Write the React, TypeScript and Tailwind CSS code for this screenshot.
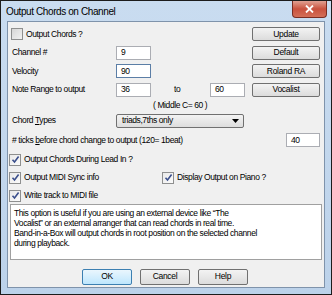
import React from 'react';

const font = { fontFamily: '"Liberation Sans", Arial, sans-serif' };

const Check: React.FC<{ checked?: boolean }> = ({ checked }) => (
  <div className={`w-[12px] h-[12px] border border-[#8e8f8f] flex items-center justify-center shrink-0 ${checked ? 'bg-gradient-to-br from-[#e9e9e9] to-[#fbfbfb]' : 'bg-gradient-to-br from-[#d6d6d6] to-[#f2f2f2]'}`}>
    {checked && (
      <svg width="9" height="9" viewBox="0 0 9 9">
        <path d="M1.5 4.8 L3.5 7 L7.6 1.6" stroke="#3b4f8c" strokeWidth="1.6" fill="none" />
      </svg>
    )}
  </div>
);

const Btn: React.FC<{ label: string; w?: string; h?: string; primary?: boolean }> = ({ label, w = 'w-[68px]', h = 'h-[14px]', primary }) => (
  <div
    className={`${w} ${h} rounded-[2px] border flex items-center justify-center text-[8.5px] tracking-[-0.3px] text-black ${
      primary
        ? 'border-[#3c7fb1] bg-gradient-to-b from-[#eaf6fd] to-[#bee6fd]'
        : 'border-[#707070] bg-gradient-to-b from-[#f3f3f3] to-[#dcdcdc]'
    }`}
  >
    {label}
  </div>
);

const Field: React.FC<{ value: string; w?: string; focus?: boolean }> = ({ value, w = 'w-[35px]', focus }) => (
  <div className={`${w} h-[14px] bg-white border ${focus ? 'border-[#5b7ea6]' : 'border-[#abadb3]'} flex items-center pl-[4px]`}>
    {value}
  </div>
);

export default function App() {
  return (
    <div className="w-[332px] h-[295px] bg-[#1c1c1c] p-[1px] text-black" style={font}>
      <div className="w-full h-full bg-gradient-to-b from-[#c9dcf0] to-[#bcd2ea] flex flex-col">
        {/* title bar */}
        <div className="h-[20px] flex items-start justify-between shrink-0">
          <div className="pl-[5px] pt-[3px] text-[10px] tracking-[-0.4px] text-black">Output Chords on Channel</div>
          <div className="mr-[4px] w-[35px] h-[17px] rounded-b-[4px] border border-t-0 border-[#7a2d22] bg-gradient-to-b from-[#e0a092] via-[#c9513e] to-[#d46f58] flex items-center justify-center">
            <svg width="9" height="8" viewBox="0 0 9 8">
              <path d="M1 0.5 L8 7.5 M8 0.5 L1 7.5" stroke="#fff" strokeWidth="1.8" />
            </svg>
          </div>
        </div>

        {/* client area */}
        <div className="flex-1 mx-[6px] mb-[6px] border border-[#7f93ab] bg-[#f0f0f0] flex flex-col text-[8.5px] tracking-[-0.4px]">
          <div className="flex pl-[3px] pr-[4px] pt-[5px]">
            <div className="flex-1 flex flex-col gap-[4.5px]">
              <div className="h-[14px] flex items-center gap-[3px]">
                <Check />
                <span>Output Chords ?</span>
              </div>
              <div className="h-[14px] flex items-center">
                <span className="w-[105px] pl-[1px]">Channel #</span>
                <Field value="9" />
              </div>
              <div className="h-[14px] flex items-center">
                <span className="w-[105px] pl-[1px]">Velocity</span>
                <Field value="90" focus />
              </div>
              <div className="h-[14px] flex items-center">
                <span className="w-[105px] pl-[1px]">Note Range to output</span>
                <Field value="36" />
                <span className="ml-[23px] w-[36px]">to</span>
                <Field value="60" />
              </div>
            </div>
            <div className="flex flex-col gap-[4.5px]">
              <Btn label="Update" />
              <Btn label="Default" />
              <Btn label="Roland RA" />
              <Btn label="Vocalist" />
            </div>
          </div>

          <div className="mt-[4px] h-[10px] flex items-center pl-[145px]">( Middle C= 60 )</div>

          <div className="mt-[3px] h-[14px] flex items-center pl-[4px]">
            <span className="w-[104px]">
              Chord <span className="underline">T</span>ypes
            </span>
            <div className="w-[128px] h-[14px] rounded-[2px] border border-[#707070] bg-gradient-to-b from-[#f3f3f3] to-[#dddddd] flex items-center justify-between pl-[5px] pr-[4px]">
              <span>triads,7ths only</span>
              <svg width="7" height="4" viewBox="0 0 7 4">
                <path d="M0 0 H7 L3.5 4 Z" fill="#000" />
              </svg>
            </div>
          </div>

          <div className="mt-[5px] h-[15px] flex items-center justify-between pl-[4px] pr-[4px]">
            <span>
              # ticks <span className="underline">b</span>efore chord change to output (120= 1beat)
            </span>
            <Field value="40" w="w-[34px]" />
          </div>

          <div className="mt-[6px] flex flex-col gap-[6px] pl-[1px]">
            <div className="h-[12px] flex items-center gap-[3px]">
              <Check checked />
              <span>Output Chords During Lead In ?</span>
            </div>
            <div className="h-[12px] flex items-center">
              <div className="w-[153px] flex items-center gap-[3px]">
                <Check checked />
                <span>Output MIDI Sync info</span>
              </div>
              <div className="flex items-center gap-[3px]">
                <Check checked />
                <span>Display Output on Piano ?</span>
              </div>
            </div>
            <div className="h-[12px] flex items-center gap-[3px]">
              <Check checked />
              <span>Write track to MIDI file</span>
            </div>
          </div>

          <div className="mt-[2px] mx-[2px] h-[56px] bg-white border border-[#a0a0a0] px-[3px] pt-[3px] leading-[10.3px] whitespace-nowrap">
            This option is useful if you are using an external device like “The
            <br />
            Vocalist” or an external arranger that can read chords in real time.
            <br />
            Band-in-a-Box will output chords in root position on the selected channel
            <br />
            during playback.
          </div>

          <div className="mt-[9px] flex justify-center gap-[8px] pr-[2px]">
            <Btn label="OK" w="w-[50px]" h="h-[16px]" primary />
            <Btn label="Cancel" w="w-[50px]" h="h-[16px]" />
            <Btn label="Help" w="w-[50px]" h="h-[16px]" />
          </div>
        </div>
      </div>
    </div>
  );
}
